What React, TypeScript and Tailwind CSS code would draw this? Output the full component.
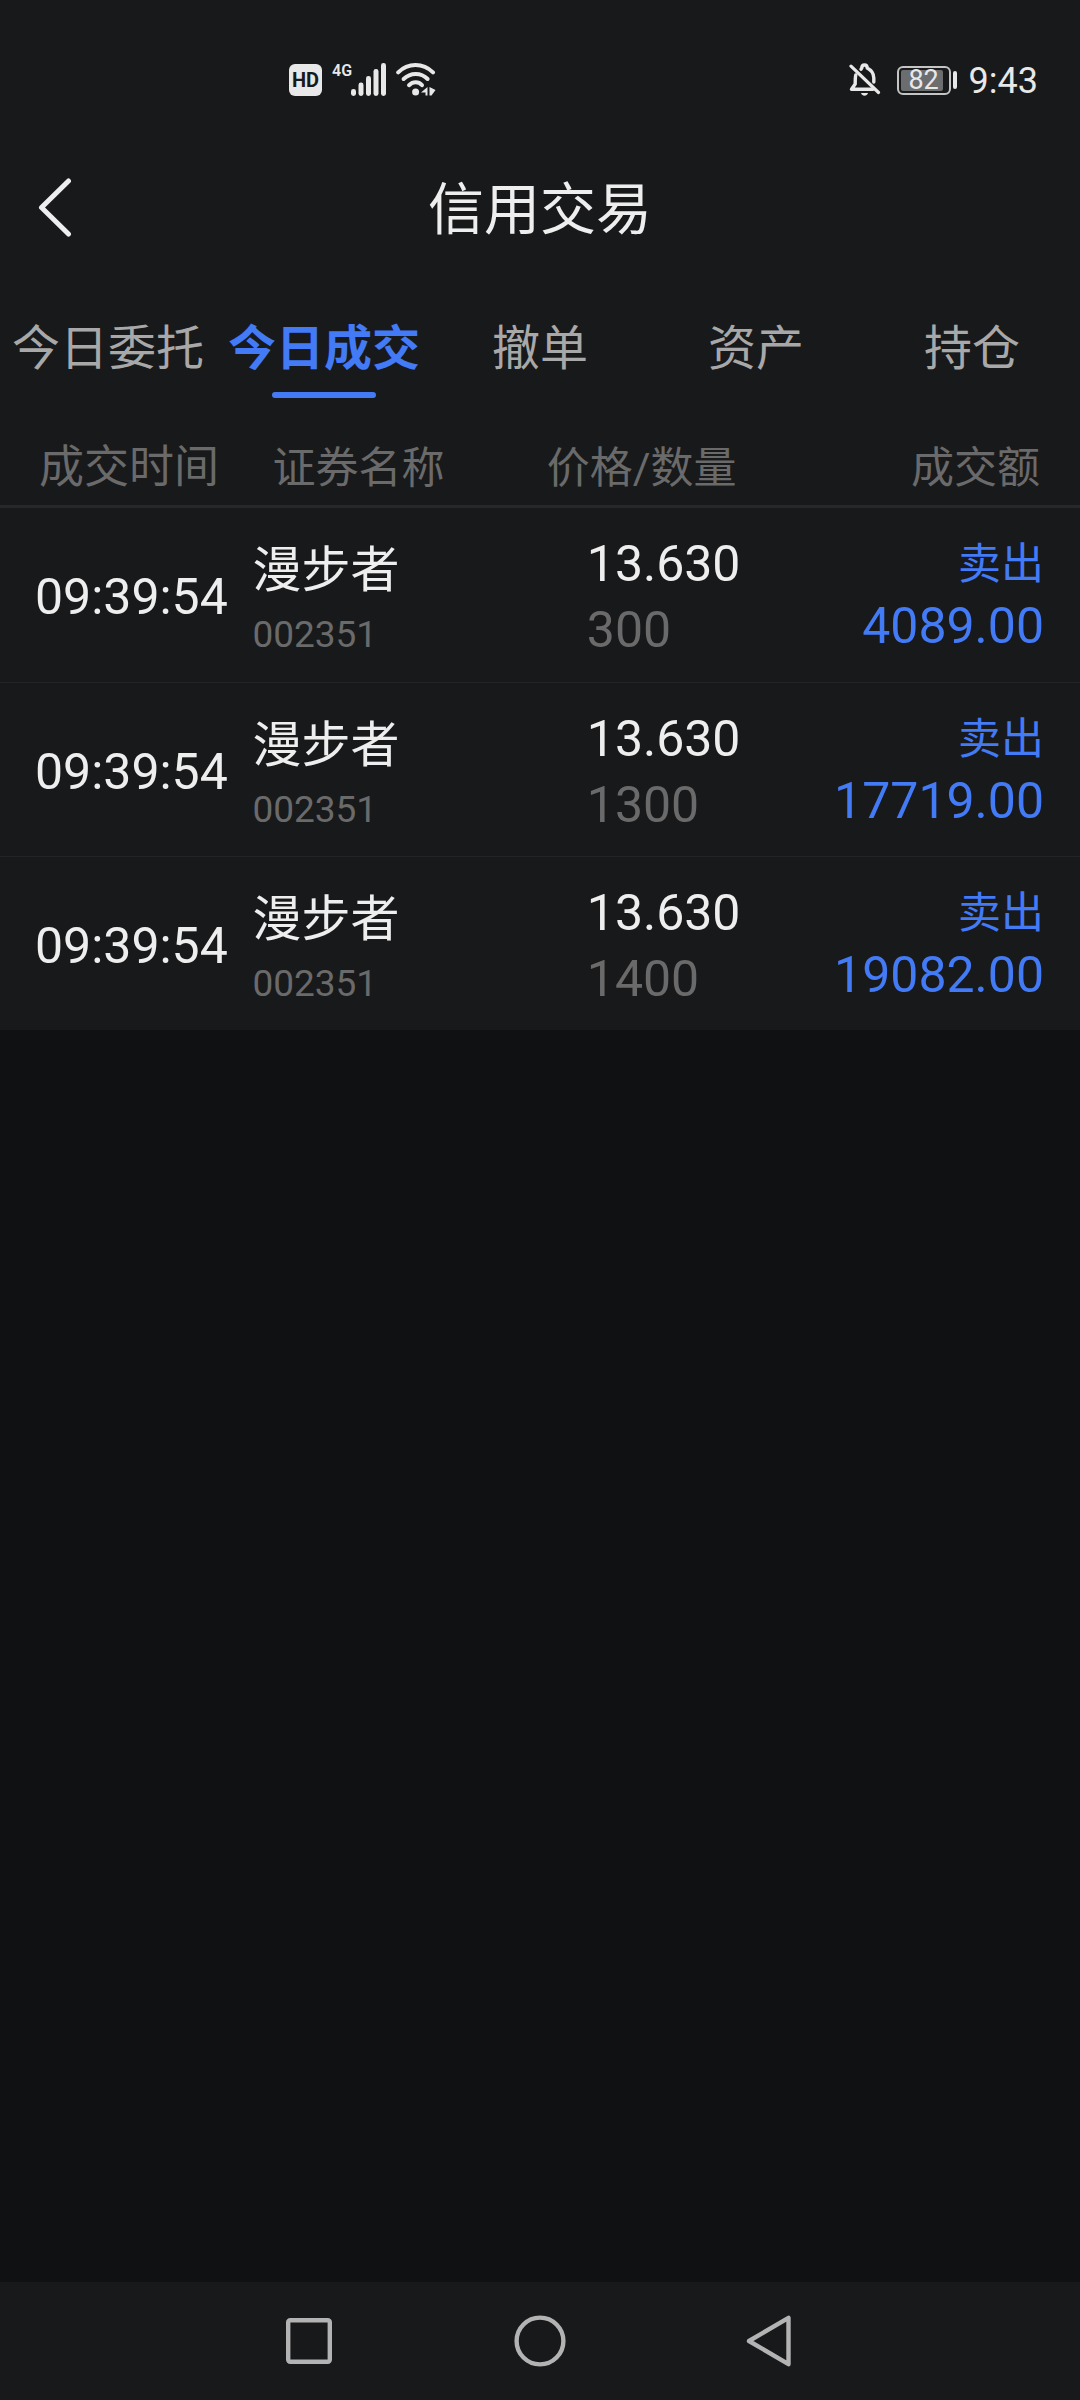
import { useState } from 'react';

import clsx from 'clsx';

const TABS = ['今日委托', '今日成交', '撤单', '资产', '持仓'];

const DEALS = [
  { id: 1, time: '09:39:54', name: '漫步者', code: '002351', price: '13.630', count: '300', side: '卖出', amount: '4089.00' },
  { id: 2, time: '09:39:54', name: '漫步者', code: '002351', price: '13.630', count: '1300', side: '卖出', amount: '17719.00' },
  { id: 3, time: '09:39:54', name: '漫步者', code: '002351', price: '13.630', count: '1400', side: '卖出', amount: '19082.00' },
];

const SignalIcon = () => (
  <svg width="35" height="34" viewBox="0 0 35 34" fill="#e8e8e8" aria-hidden="true">
    <rect x="0" y="26" width="5" height="7" rx="2.4" />
    <rect x="7.5" y="19.5" width="5" height="13.5" rx="2.4" />
    <rect x="15" y="13" width="5" height="20" rx="2.4" />
    <rect x="22.5" y="6" width="5" height="27" rx="2.4" />
    <rect x="30" y="0" width="5" height="33" rx="2.4" />
  </svg>
);

const WifiIcon = () => (
  <svg width="40" height="34" viewBox="0 0 40 34" fill="none" stroke="#e8e8e8" strokeLinecap="round" aria-hidden="true">
    <path d="M2.2 9.4 C12 -0.4 27 -0.4 37 9.4" strokeWidth="4" />
    <path d="M7.6 16 C14.5 9.2 25 9.2 31.6 16" strokeWidth="4" />
    <path d="M13 22.2 C17 18.4 22.5 18.4 26 22.2" strokeWidth="4" />
    <circle cx="19.6" cy="29" r="3.5" fill="#e8e8e8" stroke="none" />
    <path d="M31.5 24 V32.5 H29.5 V29.5 H25 Z M33.5 24 L39.5 27 L35.5 32.5 H33.5 Z" fill="#e8e8e8" stroke="none" />
  </svg>
);

const BellOffIcon = () => (
  <svg width="32" height="34" viewBox="0 0 32 34" fill="none" stroke="#e8e8e8" strokeLinecap="round" strokeLinejoin="round" aria-hidden="true">
    <path d="M6.8 12 C6.2 14 6.2 16 6.2 21 L2.5 26.3 H24" strokeWidth="3.4" />
    <path d="M12 6.2 C12.3 5.6 12.6 5.4 12.8 5 C12.8 1 18.2 1 18.2 5 C22.8 7.4 24.8 10.5 24.8 15 V19" strokeWidth="3.4" />
    <path d="M2 3.2 L29.5 29.5" strokeWidth="3.2" />
    <path d="M12 30 H19 C18 33.6 13 33.6 12 30 Z" fill="#e8e8e8" stroke="none" />
  </svg>
);

const StatusBar = () => (
  <div className="h-28 pt-12 pl-[289px] pr-[42px] flex items-center justify-between text-[#e8e8e8]">
    <div className="flex items-center">
      <span className="w-[33px] h-8 rounded-md bg-[#e8e8e8] text-[#18191b] text-xl leading-8 font-bold text-center">{'HD'}</span>
      <div className="ml-2.5 flex items-start">
        <span className="w-[19px] text-base leading-4 font-semibold">{'4G'}</span>
        <SignalIcon />
      </div>
      <div className="ml-2.5">
        <WifiIcon />
      </div>
    </div>
    <div className="flex items-center">
      <BellOffIcon />
      <div className="ml-4 flex items-center gap-0.5">
        <div className="w-[54px] h-[29px] p-0.5 border-2 border-[#c4c4c4] rounded-md">
          <div className="w-[42px] h-[21px] bg-[#6c6d6f] rounded-xs flex justify-center">
            <span className="pl-1 text-[27px] leading-[21px]">{'82'}</span>
          </div>
        </div>
        <div className="w-1 h-[18px] rounded-xs bg-[#e8e8e8]" />
      </div>
      <span className="ml-3 pt-0.5 text-4xl leading-10">{'9:43'}</span>
    </div>
  </div>
);

const TitleBar = () => (
  <header className="h-48 px-9 grid grid-cols-[1fr_auto_1fr] items-center">
    <button type="button" aria-label="返回" className="w-10 h-16 flex items-center">
      <svg width="38" height="60" viewBox="0 0 38 60" fill="none" stroke="#eeeeee" strokeWidth="5" strokeLinecap="round" strokeLinejoin="round">
        <path d="M32.5 3 L5.5 29.5 L32.5 56" />
      </svg>
    </button>
    <h1 className="pt-1 text-[56px] leading-16 text-[#eeeeee]">{'信用交易'}</h1>
  </header>
);

const DealTable = () => (
  <table className="w-full table-fixed border-separate border-spacing-0 bg-[#18191b]">
    <colgroup>
      <col className="w-[23%]" />
      <col className="w-[28%]" />
      <col className="w-[25%]" />
      <col className="w-[24%]" />
    </colgroup>
    <thead>
      <tr className="h-[110px] text-[43px] leading-14 text-[#6a6a6a] text-left *:pt-8 *:border-b-3 *:border-[#27282a]">
        <th className="pl-[39px] text-[45px] font-normal">{'成交时间'}</th>
        <th className="pl-6 font-normal">{'证券名称'}</th>
        <th className="font-normal">
          <span className="-ml-1">{'价格/数量'}</span>
        </th>
        <th className="pr-10 font-normal text-right">{'成交额'}</th>
      </tr>
    </thead>
    <tbody>
      {DEALS.map((deal) => (
        <tr key={deal.id} className="h-[174px] text-[50px] text-[#eeeeee] *:border-t *:border-[#232426] first:*:border-t-0">
          <td className="pt-1 pl-[35px] leading-16 whitespace-nowrap">{deal.time}</td>
          <td className="pt-4 pl-1">
            <div className="text-[49px] leading-16">{deal.name}</div>
            <div className="text-[37px] leading-16 text-[#6a6a6a]">{deal.code}</div>
          </td>
          <td className="pt-1 pl-9 leading-[66px]">
            <div>{deal.price}</div>
            <div className="text-[#6a6a6a]">{deal.count}</div>
          </td>
          <td className="pr-9 leading-[62px] text-right text-[#437af5]">
            <div className="text-[43px]">{deal.side}</div>
            <div>{deal.amount}</div>
          </td>
        </tr>
      ))}
    </tbody>
  </table>
);

const SystemNav = () => (
  <nav className="h-[118px] bg-[#18191b] flex items-center justify-center gap-[178px]">
    <button type="button" aria-label="最近任务">
      <svg width="52" height="52" viewBox="0 0 52 52" fill="none" stroke="#b3b3b3" strokeWidth="4.4">
        <rect x="4.2" y="5.2" width="41.6" height="41.6" rx="2" />
      </svg>
    </button>
    <button type="button" aria-label="主屏幕">
      <svg width="52" height="52" viewBox="0 0 52 52" fill="none" stroke="#b3b3b3" strokeWidth="4.4">
        <circle cx="26" cy="26" r="23.4" />
      </svg>
    </button>
    <button type="button" aria-label="返回">
      <svg width="52" height="52" viewBox="0 0 52 52" fill="none" stroke="#b3b3b3" strokeWidth="4.4" strokeLinejoin="round">
        <path d="M5 26 L44.5 2.8 V49.2 Z" />
      </svg>
    </button>
  </nav>
);

const App = () => {
  const [activeTab, setActiveTab] = useState('今日成交');

  return (
    <div className="min-h-screen flex flex-col bg-[#101113] font-[Roboto,'Noto_Sans_CJK_SC',sans-serif]">
      <div className="bg-[#18191b]">
        <StatusBar />
        <TitleBar />
        <div role="tablist" className="grid grid-cols-5">
          {TABS.map((tab) => (
            <button
              key={tab}
              type="button"
              role="tab"
              aria-selected={tab === activeTab}
              onClick={() => setActiveTab(tab)}
              className={clsx(
                'pt-0.5 flex flex-col items-center text-5xl leading-[86px] whitespace-nowrap',
                tab === activeTab ? 'font-bold text-[#437af5]' : 'text-[#a8a8a8]',
              )}
            >
              {tab}
              <span className={clsx('w-[104px] h-1.5 rounded-full', tab === activeTab && 'bg-[#437af5]')} />
            </button>
          ))}
        </div>
      </div>
      <main className="flex-1">
        <DealTable />
      </main>
      <SystemNav />
    </div>
  );
};

export default App;
